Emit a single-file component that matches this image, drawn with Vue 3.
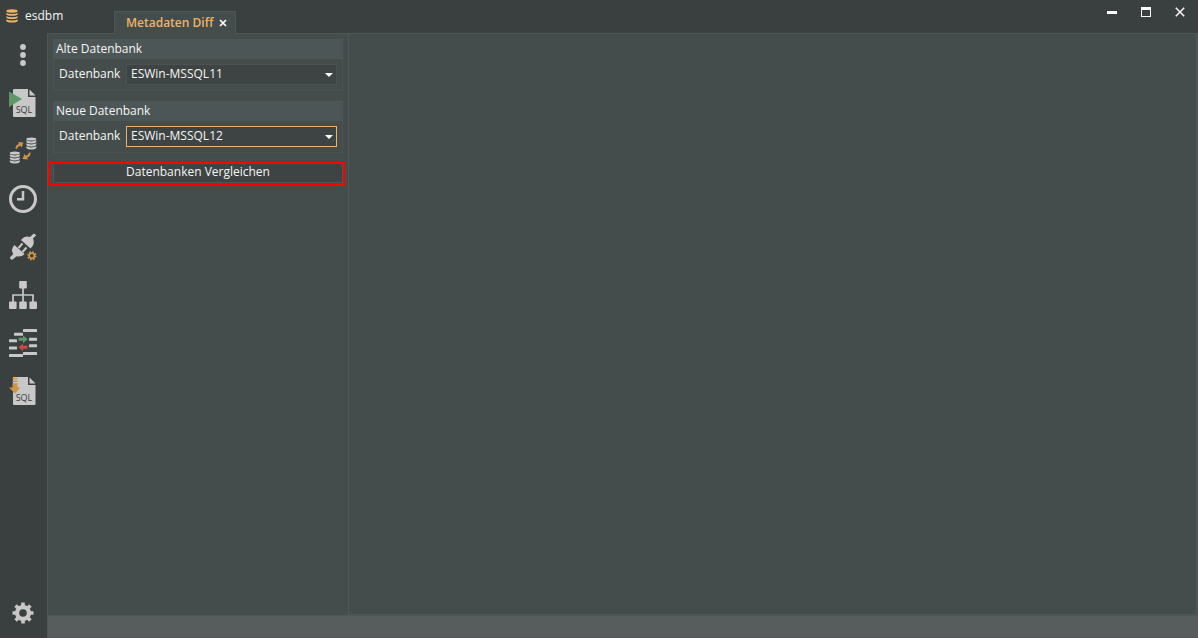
<script setup>
import { reactive } from 'vue'

const databases = ['ESWin-MSSQL11', 'ESWin-MSSQL12']

const groups = reactive([
  { id: 'old-db', title: 'Alte Datenbank', value: 'ESWin-MSSQL11', active: false },
  { id: 'new-db', title: 'Neue Datenbank', value: 'ESWin-MSSQL12', active: true },
])
</script>

<template>
  <div class="app">
    <header class="titlebar">
      <div class="brand">
        <svg width="12" height="14" viewBox="0 0 12 14" fill="#f0b263">
          <path d="M0.3 2Q0.3 0.3 6 0.3T11.7 2Q11.7 3.7 6 3.7T0.3 2Z" />
          <path d="M0.3 4Q2 5 6 5T11.7 4V5.3Q10.5 6.8 6 6.8T0.3 5.3Z" />
          <path d="M0.3 7.2Q2 8.2 6 8.2T11.7 7.2V8.5Q10.5 10 6 10T0.3 8.5Z" />
          <path d="M0.3 10.5Q2 11.5 6 11.5T11.7 10.5V11.9Q10.5 13.4 6 13.4T0.3 11.9Z" />
        </svg>
        <span>esdbm</span>
      </div>
      <div class="tab">
        <span>Metadaten Diff</span>
        <button class="tab-close" type="button" aria-label="Tab schließen">
          <svg width="8" height="8" viewBox="0 0 8 8"><path d="M1 1l6 6M7 1l-6 6" stroke="#fff" stroke-width="1.7" /></svg>
        </button>
      </div>
      <div class="window-controls">
        <button type="button" aria-label="Minimieren">
          <svg width="10" height="10" viewBox="0 0 10 10"><path d="M0 4h10v3H0z" fill="#fff" /></svg>
        </button>
        <button type="button" aria-label="Maximieren">
          <svg width="10" height="10" viewBox="0 0 10 10"><path d="M0 0h10v10H0zM1 3v6h8V3z" fill="#fff" fill-rule="evenodd" /></svg>
        </button>
        <button type="button" aria-label="Schließen">
          <svg width="10" height="10" viewBox="0 0 10 10"><path d="M0.8 0.8l8.4 8.4M9.2 0.8L0.8 9.2" stroke="#f2f2f2" stroke-width="1.6" /></svg>
        </button>
      </div>
    </header>

    <nav class="sidebar" aria-label="Werkzeuge">
      <button type="button" aria-label="Menü">
        <svg viewBox="0 0 28 28" fill="#c8c8c8">
          <circle cx="14" cy="6" r="2.9" /><circle cx="14" cy="14" r="2.9" /><circle cx="14" cy="22" r="2.9" />
        </svg>
      </button>
      <button type="button" aria-label="SQL ausführen">
        <svg viewBox="0 0 28 28">
          <path d="M5 0H19V8H26.500V27Q26.500 28 25.500 28H5Q4 28 4 27V1Q4 0 5 0Z" fill="#c8c8c8" />
          <path d="M20.500 0.500V6.500H26.500Z" fill="#c8c8c8" />
          <path d="M0 2.500L13 10L0 18Z" fill="#5f9867" />
          <text x="15" y="24" text-anchor="middle" class="icon-text">SQL</text>
        </svg>
      </button>
      <button type="button" aria-label="Datenbanken synchronisieren">
        <svg viewBox="0 0 28 28">
          <g id="stack" fill="#c8c8c8">
            <path d="M17.300 2Q17.300 0.500 22.300 0.500T27.300 2Q27.300 3.500 22.300 3.500T17.300 2Z" />
            <path d="M17.300 3.300Q19 4.400 22.300 4.400T27.300 3.300V5Q26 6.500 22.300 6.500T17.300 5Z" />
            <path d="M17.300 6.300Q19 7.400 22.300 7.400T27.300 6.300V8Q26 9.500 22.300 9.500T17.300 8Z" />
            <path d="M17.300 9.300Q19 10.400 22.300 10.400T27.300 9.300V11Q26 12.500 22.300 12.500T17.300 11Z" />
          </g>
          <use href="#stack" x="-16.500" y="14" />
          <path d="M6.500 12Q6.500 7.500 10 7L9 5L14.500 5.500L12.500 10.500L11.300 8.800Q8.500 9.500 7.700 12Z" fill="#cf9447" />
          <path d="M21.500 15.500Q21.500 20 18 20.500L19 22.500L13.500 22L15.500 17L16.700 18.700Q19.500 18 20.300 15.500Z" fill="#cf9447" />
        </svg>
      </button>
      <button type="button" aria-label="Verlauf">
        <svg viewBox="0 0 28 28" fill="none" stroke="#c8c8c8">
          <circle cx="14" cy="14" r="12.500" stroke-width="3" />
          <path d="M14 6V14.300H8" stroke-width="2.500" />
        </svg>
      </button>
      <button type="button" aria-label="Verbindungen">
        <svg viewBox="0 0 28 28">
          <path d="M12 7Q16 2.200 21 4L24.500 0.800Q26.500 0.500 27 2.500L24 5.500Q26.500 11 21.500 15.500Z" fill="#c8c8c8" />
          <path d="M5.500 12L15.500 21Q12.500 24.500 7.500 23.300L3.700 26.500Q1 27.200 1 24.300L4.300 21Q1 16 5.500 12Z" fill="#c8c8c8" />
          <path d="M9.500 15L13.500 10.500M13.500 19L17.500 14.500" stroke="#c8c8c8" stroke-width="2" />
          <circle cx="22.800" cy="22.800" r="2.600" fill="none" stroke="#cf9447" stroke-width="1.700" />
          <circle cx="22.800" cy="22.800" r="3.900" fill="none" stroke="#cf9447" stroke-width="1.600" stroke-dasharray="1.600 1.463" />
        </svg>
      </button>
      <button type="button" aria-label="Struktur">
        <svg viewBox="0 0 28 28">
          <g fill="#c8c8c8">
            <rect x="10.200" y="0" width="7.600" height="7.600" rx="1" />
            <rect x="0" y="20.400" width="7.600" height="7.600" rx="1" />
            <rect x="10.200" y="20.400" width="7.600" height="7.600" rx="1" />
            <rect x="20.400" y="20.400" width="7.600" height="7.600" rx="1" />
          </g>
          <path d="M14 7V21M4 21V14H24V21" fill="none" stroke="#c8c8c8" stroke-width="1.700" />
        </svg>
      </button>
      <button type="button" aria-label="Metadaten Diff">
        <svg viewBox="0 0 28 28">
          <g fill="#c8c8c8">
            <rect x="14" y="0" width="14" height="3" rx="0.500" />
            <rect x="5" y="3.700" width="9" height="3" rx="0.500" />
            <rect x="20" y="8.700" width="8" height="3" rx="0.500" />
            <rect x="0" y="10.300" width="8" height="3" rx="0.500" />
            <rect x="20" y="15.300" width="8" height="3" rx="0.500" />
            <rect x="0" y="17.500" width="8" height="3" rx="0.500" />
            <rect x="14" y="23" width="14" height="3" rx="0.500" />
            <rect x="0" y="25" width="14" height="3" rx="0.500" />
          </g>
          <path d="M9.500 8.700H14V6.500L18.700 10.200L14 14V11.700H9.500Z" fill="#5f9867" />
          <path d="M18.500 16.700H14V14.500L9.500 18.200L14 22V19.700H18.500Z" fill="#c94a46" />
        </svg>
      </button>
      <button type="button" aria-label="SQL exportieren">
        <svg viewBox="0 0 28 28">
          <path d="M5 0H19V8H26.500V27Q26.500 28 25.500 28H5Q4 28 4 27V1Q4 0 5 0Z" fill="#c8c8c8" />
          <path d="M20.500 0.500V6.500H26.500Z" fill="#c8c8c8" />
          <path d="M3.500 1H8.500V2.200H3.500ZM3.500 3.500H8.500V5H3.500ZM3.500 6.300H8.500V10.500H11.500L6 16.500L0 10.500H3.500Z" fill="#cf9447" />
          <text x="15" y="24" text-anchor="middle" class="icon-text">SQL</text>
        </svg>
      </button>
      <button class="settings" type="button" aria-label="Einstellungen">
        <svg viewBox="0 0 28 28" fill="none" stroke="#c8c8c8">
          <circle cx="14" cy="14" r="5.900" stroke-width="4.200" />
          <path d="M14 3.500V7M14 21V24.500M3.500 14H7M21 14H24.500M6.600 6.600L9 9M19 19L21.400 21.400M6.600 21.400L9 19M19 9L21.400 6.600" stroke-width="3.600" />
        </svg>
      </button>
    </nav>

    <main class="workspace">
      <form class="panel" @submit.prevent>
        <section v-for="group in groups" :key="group.id" class="group">
          <h2>{{ group.title }}</h2>
          <div class="field">
            <label :for="group.id">Datenbank</label>
            <div class="select-box">
              <select :id="group.id" v-model="group.value" :class="{ active: group.active }">
                <option v-for="db in databases" :key="db">{{ db }}</option>
              </select>
              <svg class="arrow" width="8" height="4" viewBox="0 0 8 4"><path d="M0 0h8L4 4z" fill="#fff" /></svg>
            </div>
          </div>
        </section>
        <div class="highlight">
          <button class="compare" type="submit">Datenbanken Vergleichen</button>
        </div>
      </form>
      <section class="result" aria-label="Ergebnis"></section>
    </main>
    <footer class="statusbar"></footer>
  </div>
</template>

<style>
body {
  margin: 0;
  background: #3a403f;
}
</style>

<style scoped>
.app {
  display: grid;
  grid-template: 33px 1fr 22px / 47px 1fr;
  min-height: 100vh;
  background: #3a403f;
  color: #f5f5f5;
  font: 12px/16px "Open Sans", "Noto Sans", sans-serif;
}
button {
  padding: 0;
  border: 0;
  background: none;
  color: inherit;
  font: inherit;
}
svg {
  display: block;
}
.titlebar {
  grid-column: 1 / -1;
  display: flex;
  align-items: flex-start;
}
.brand {
  display: flex;
  align-items: center;
  gap: 7px;
  box-sizing: border-box;
  width: 114px;
  padding: 8px 0 0 6px;
}
.tab {
  position: relative;
  z-index: 1;
  display: flex;
  align-items: center;
  gap: 6px;
  box-sizing: border-box;
  height: 23px;
  margin-top: 11px;
  padding: 0 8px 0 11px;
  border: 1px solid #4f5756;
  border-bottom: 0;
  background: #444d4b;
  color: #f0b263;
  font-weight: 600;
}
.window-controls {
  display: flex;
  gap: 24px;
  margin-left: auto;
  padding: 7px 13px 0 0;
}
.sidebar {
  grid-row: 2 / 4;
  display: flex;
  flex-direction: column;
  align-items: flex-start;
  gap: 20px;
  padding: 8px 9px 11px;
}
.sidebar button,
.sidebar svg {
  width: 28px;
  height: 28px;
}
.sidebar .settings {
  margin-top: auto;
}
.icon-text {
  fill: #3a403f;
  font: 400 9px "Open Sans", sans-serif;
}
.workspace {
  display: grid;
  grid-template-columns: 300px 1fr;
  border: 1px solid #4f5756;
  border-right-width: 2px;
  background: #444d4b;
}
.panel {
  display: flex;
  flex-direction: column;
  gap: 10px;
  padding: 5px;
}
.result {
  border-left: 1px solid #4f5756;
  border-bottom: 1px solid #4f5756;
}
.group {
  box-sizing: border-box;
  height: 52px;
  border: 1px solid #4b5352;
  border-top: 0;
}
h2 {
  margin: 0 -1px;
  padding: 2px 3px;
  background: #4d5656;
  font-size: 12px;
  font-weight: 400;
}
.field {
  display: grid;
  grid-template-columns: 67px 1fr;
  padding: 5px 5px 0;
}
label {
  line-height: 20px;
}
.select-box {
  position: relative;
}
select {
  display: block;
  width: 100%;
  height: 21px;
  padding: 0 20px 2px 4px;
  border: 1px solid #4b5352;
  border-radius: 0;
  outline: 0;
  appearance: none;
  background: #3e4443;
  color: inherit;
  font: inherit;
}
select.active {
  border-color: #f0b263;
}
.arrow {
  position: absolute;
  top: 9px;
  right: 4px;
}
.highlight {
  position: relative;
}
.highlight::after {
  content: "";
  position: absolute;
  inset: -1px -2px -3px -5px;
  border: 2px solid #f00;
  pointer-events: none;
}
.compare {
  display: block;
  width: 100%;
  height: 20px;
  padding-bottom: 3px;
  border: 1px solid #4f5756;
  background: #3e4443;
}
.statusbar {
  border-left: 1px solid #4f5756;
  border-bottom: 1px solid #565258;
  background: #575d5d;
}
</style>
